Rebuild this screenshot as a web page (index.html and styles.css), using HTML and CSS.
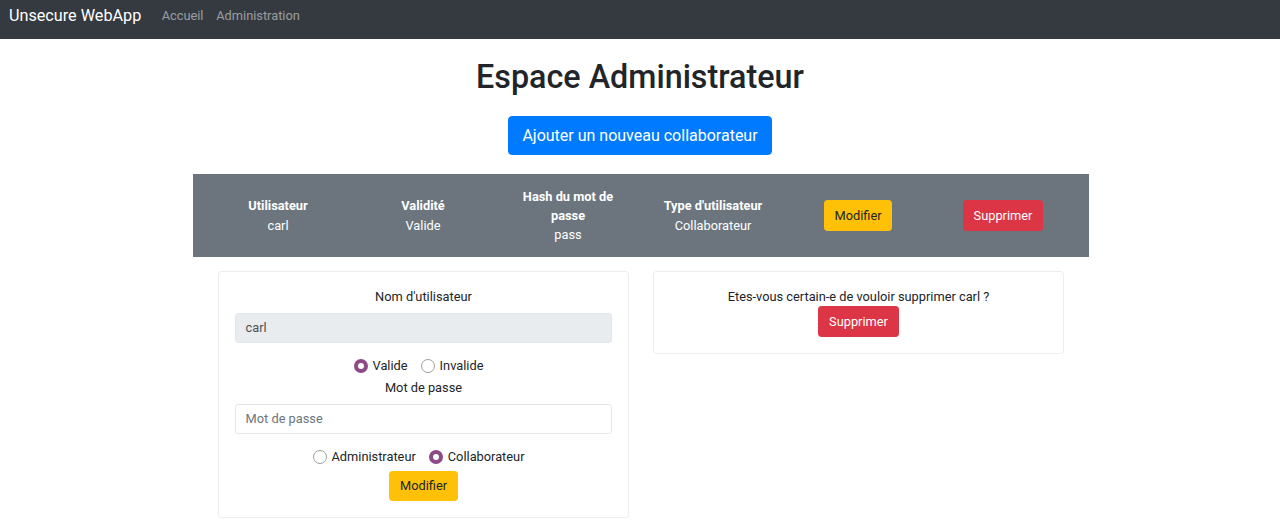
FILE: index.html
```html
<!DOCTYPE html>
<html lang="fr">
<head>
<meta charset="utf-8">
<title>Unsecure WebApp</title>
<link rel="stylesheet" href="styles.css">
</head>
<body>
<nav class="navbar">
  <a class="brand" href="#">Unsecure WebApp</a>
  <a class="nav-link" href="#">Accueil</a>
  <a class="nav-link" href="#">Administration</a>
</nav>
<main class="main">
  <h1 class="title">Espace Administrateur</h1>
  <button class="btn btn-primary btn-lg">Ajouter un nouveau collaborateur</button>
  <div class="user-row">
    <div class="cell"><div class="head">Utilisateur</div><div>carl</div></div>
    <div class="cell"><div class="head">Validité</div><div>Valide</div></div>
    <div class="cell"><div class="head">Hash du mot de passe</div><div>pass</div></div>
    <div class="cell"><div class="head">Type d'utilisateur</div><div>Collaborateur</div></div>
    <div class="cell"><button class="btn btn-warning">Modifier</button></div>
    <div class="cell"><button class="btn btn-danger">Supprimer</button></div>
  </div>
  <div class="cards">
    <div class="card">
      <div class="label">Nom d'utilisateur</div>
      <div class="input disabled">carl</div>
      <div class="radios first">
        <span class="radio-item"><span class="radio checked"></span>Valide</span>
        <span class="radio-item"><span class="radio"></span>Invalide</span>
      </div>
      <div class="label pw-label">Mot de passe</div>
      <div class="input placeholder">Mot de passe</div>
      <div class="radios second">
        <span class="radio-item"><span class="radio"></span>Administrateur</span>
        <span class="radio-item"><span class="radio checked"></span>Collaborateur</span>
      </div>
      <div class="center"><button class="btn btn-warning">Modifier</button></div>
    </div>
    <div class="card card-top">
      <div class="label">Etes-vous certain-e de vouloir supprimer carl ?</div>
      <div class="center"><button class="btn btn-danger">Supprimer</button></div>
    </div>
  </div>
</main>
</body>
</html>
```

FILE: styles.css
```css
* { box-sizing: border-box; }
html, body { margin: 0; padding: 0; }
body {
  font-family: Roboto, "Liberation Sans", sans-serif;
  font-size: 12.8px;
  line-height: 19.2px;
  color: #212529;
  background: #fff;
}
.navbar {
  height: 39px;
  background: #343a40;
  display: flex;
  align-items: center;
  padding: 0 9px;
}
.brand {
  color: #fff;
  text-decoration: none;
  font-size: 16.2px;
  line-height: 24px;
  margin-right: 14px;
  margin-top: -7px;
}
.nav-link {
  color: rgba(255,255,255,.5);
  text-decoration: none;
  padding: 0 6.4px;
  margin-top: -7px;
}
.main {
  display: flex;
  flex-direction: column;
  align-items: center;
}
.title {
  font-size: 32.3px;
  font-weight: 500;
  line-height: 38.4px;
  margin: 19px 0 20px;
}
.btn {
  font-family: inherit;
  border: 1px solid transparent;
  border-radius: 3.2px;
  font-size: 12.8px;
  line-height: 19.2px;
  padding: 4.8px 9.6px;
  cursor: pointer;
}
.btn-lg {
  font-size: 16px;
  line-height: 24px;
  padding: 6.4px 13.6px;
  border-radius: 4px;
}
.btn-primary { background: #007bff; color: #fff; border-color: #007bff; }
.btn-warning { background: #ffc107; color: #212529; border-color: #ffc107; }
.btn-danger { background: #dc3545; color: #fff; border-color: #dc3545; }
.user-row {
  margin-top: 19px;
  margin-left: 1px;
  width: 896px;
  height: 83px;
  background: #6c757d;
  color: #fff;
  display: grid;
  grid-template-columns: repeat(6, 1fr);
  padding: 0 13px;
  align-items: center;
  text-align: center;
}
.cell { padding: 0 16px; }
.head { font-weight: 700; }
.cards {
  width: 896px;
  display: flex;
  align-items: flex-start;
  gap: 24px;
  padding: 0 24px 0 26px;
  margin-top: 14px;
}
.card {
  flex: 1;
  border: 1px solid rgba(0,0,0,.07);
  border-radius: 3.2px;
  padding: 15px 16px 16px;
  text-align: center;
}
.label { line-height: 19.2px; }
.input {
  height: 30.4px;
  margin-top: 6.4px;
  border: 1px solid #e3e6e9;
  border-radius: 3.2px;
  padding: 0 9.6px;
  text-align: left;
  line-height: 28.4px;
  color: #495057;
}
.input.disabled { background: #e9ecef; border-color: #e3e6e9; }
.input.placeholder { color: #6c757d; background: #fff; }
.radios {
  display: flex;
  justify-content: center;
  gap: 13px;
  margin-top: 13px;
  padding-right: 10px;
}
.radio-item {
  display: inline-flex;
  align-items: center;
  gap: 5px;
}
.radio {
  width: 14px;
  height: 14px;
  border-radius: 50%;
  border: 1px solid #a0a0a0;
  background: #fff;
  display: inline-block;
}
.radio.checked {
  border: 4.5px solid #8d4a88;
  background: #fff;
}
.pw-label { margin-top: 3px; }
.second + .center { margin-top: 4px; }
.center { text-align: center; }
```
